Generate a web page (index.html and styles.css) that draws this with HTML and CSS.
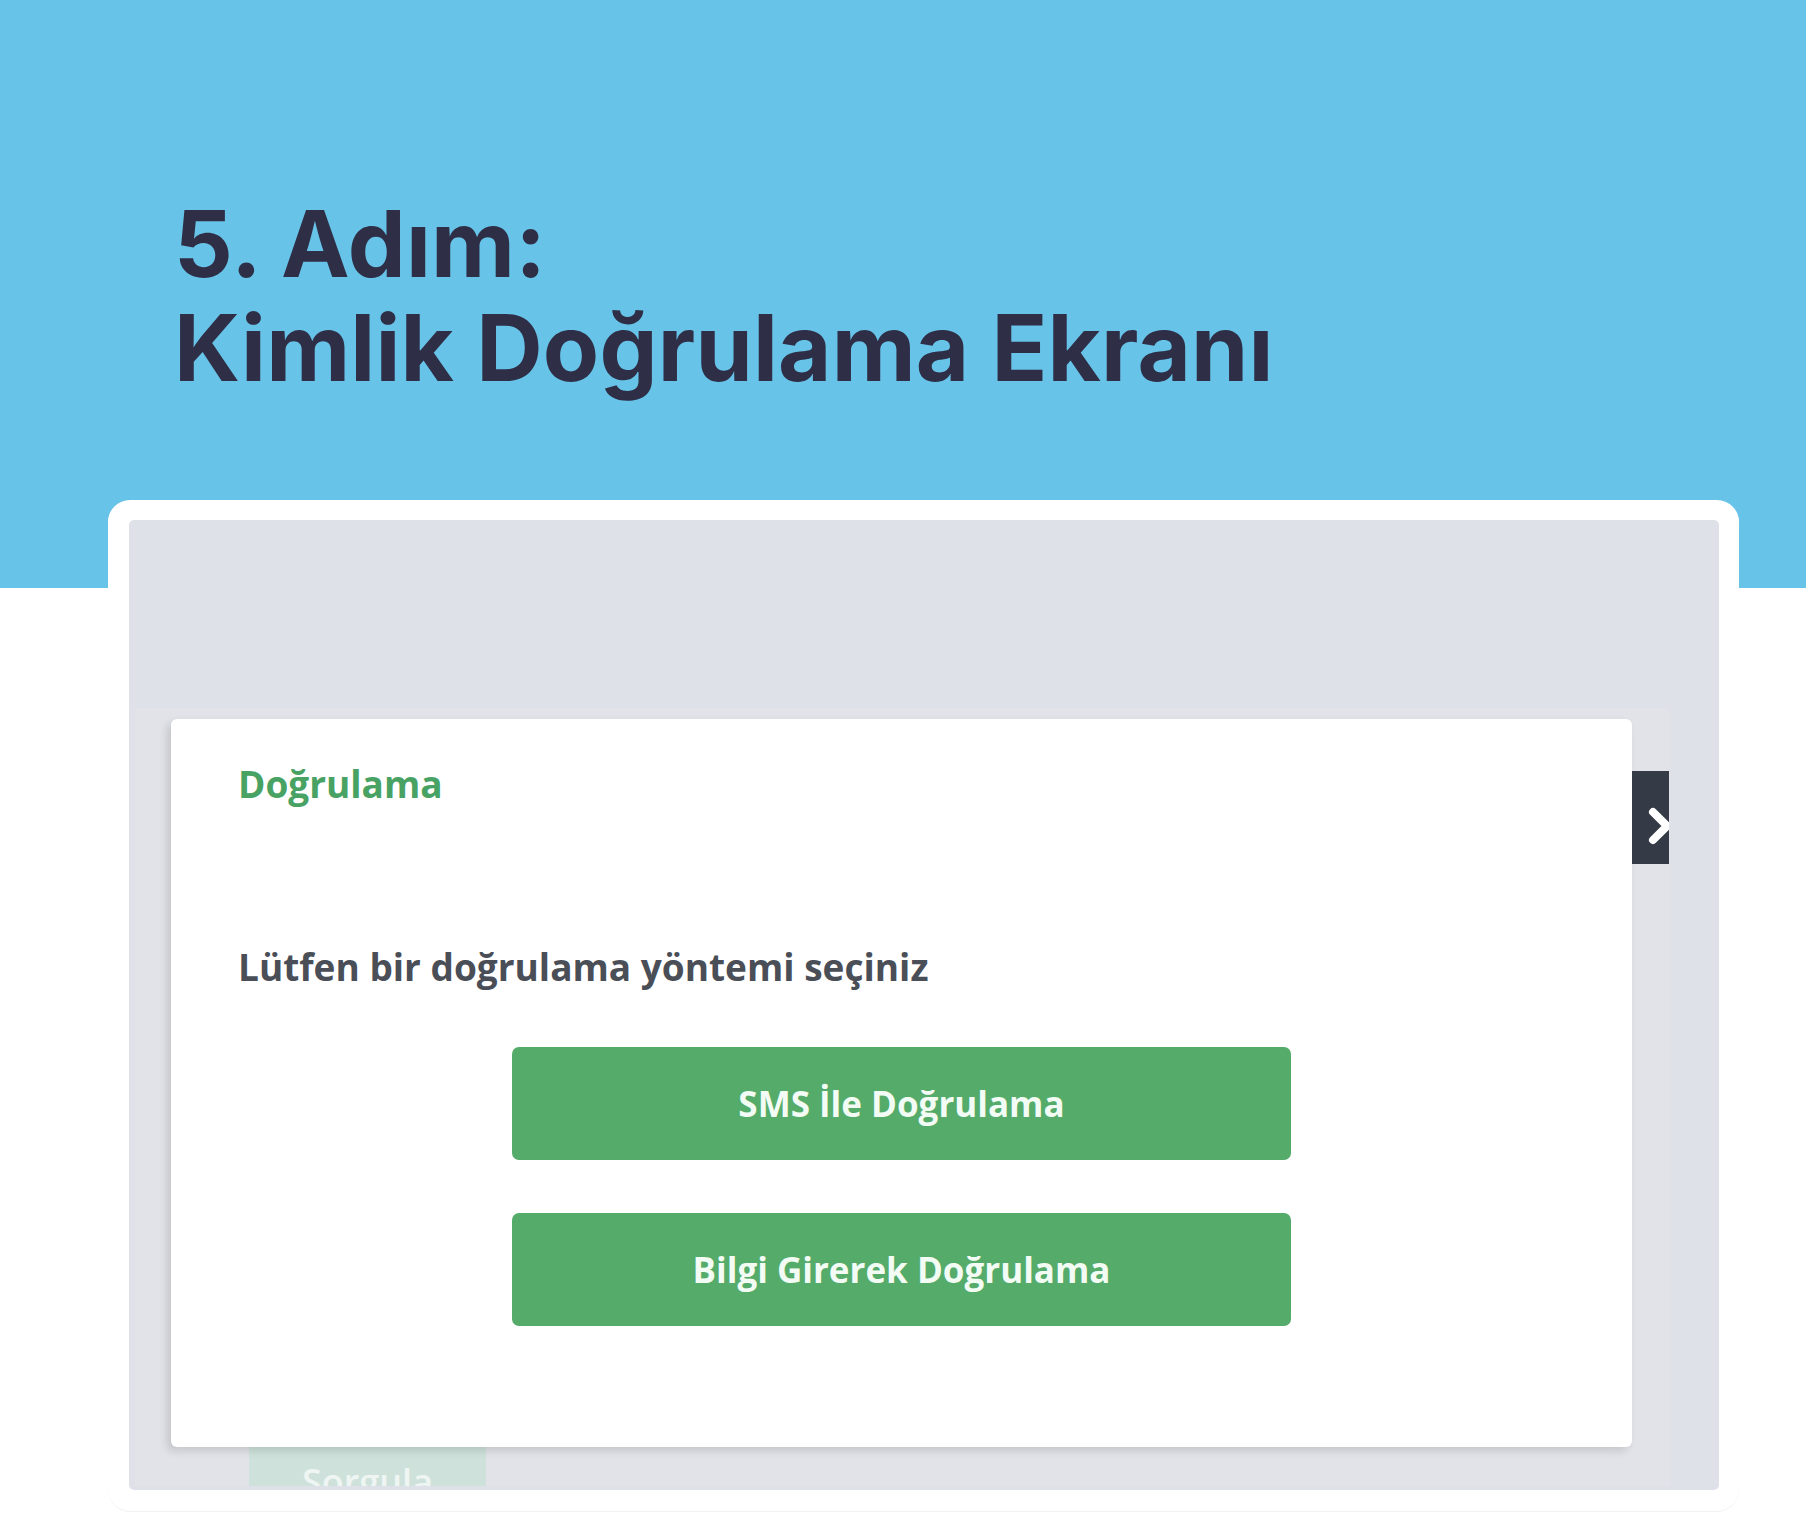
FILE: index.html
```html
<!DOCTYPE html>
<html lang="tr">
<head>
    <meta charset="UTF-8">
    <meta name="viewport" content="width=device-width, initial-scale=1.0">
    <title>5. Adım: Kimlik Doğrulama Ekranı</title>
    <link rel="stylesheet" href="styles.css">
</head>
<body>
    <div class="page">
        <!-- Title -->
        <h1 class="step-title">5. Adım:<br>Kimlik Doğrulama Ekranı</h1>

        <!-- Screenshot frame -->
        <div class="shot-frame">
            <div class="shot-screen">
                <div class="backdrop">
                    <div class="modal-row">
                        <div class="modal-card">
                            <h2 class="modal-title">Doğrulama</h2>
                            <p class="modal-text">Lütfen bir doğrulama yöntemi seçiniz</p>
                            <div class="modal-actions">
                                <button class="btn-verify">SMS İle Doğrulama</button>
                                <button class="btn-verify">Bilgi Girerek Doğrulama</button>
                            </div>
                        </div>
                        <div class="side-tab">
                            <svg viewBox="0 0 28 40" fill="none" stroke="#fff" stroke-width="8" stroke-linecap="round" stroke-linejoin="round">
                                <path d="M6 6l14 14L6 34"/>
                            </svg>
                        </div>
                    </div>
                    <div class="btn-query">Sorgula</div>
                </div>
            </div>
        </div>
    </div>
</body>
</html>
```

FILE: styles.css
```css
* {
    margin: 0;
    padding: 0;
    box-sizing: border-box;
}

body {
    font-family: "Open Sans", "Noto Sans", sans-serif;
    background: linear-gradient(180deg, #68c3e8 0, #68c3e8 588px, #fff 588px);
    color: #333;
    min-height: 1532px;
}

.page {
    padding: 192px 0 0 108px;
}

/* Title */
.step-title {
    font-family: Inter, "Liberation Sans", sans-serif;
    font-size: 92px;
    font-weight: 700;
    line-height: 104px;
    letter-spacing: 0.2px;
    color: #2e2f47;
    margin-left: 66px;
    margin-bottom: 100px;
}

/* Frame */
.shot-frame {
    width: 1631px;
    height: 1011px;
    background: #fff;
    border-radius: 22px;
    padding: 20px 20px 21px 21px;
    box-shadow: 0 1px 0 #f1f2f4;
}

.shot-screen {
    height: 970px;
    background: #dfe1e8;
    border-radius: 5px;
    overflow: hidden;
    padding: 188px 49px 0 6px;
}

.backdrop {
    height: 778px;
    background: #e2e3e8;
    overflow: hidden;
    padding: 11px 0 0 36px;
}

.modal-row {
    display: flex;
    align-items: flex-start;
    position: relative;
    z-index: 1;
}

/* Modal card */
.modal-card {
    width: 1461px;
    height: 728px;
    background: #fff;
    border-radius: 6px;
    box-shadow: -4px 4px 9px rgba(0,0,0,0.13);
    padding: 40px 67px 0;
}

.modal-title {
    font-size: 37px;
    font-weight: 700;
    color: #47a263;
    line-height: 50px;
}

.modal-text {
    font-size: 37px;
    font-weight: 700;
    color: #4a4e57;
    line-height: 46px;
    margin-top: 135px;
}

.modal-actions {
    display: flex;
    flex-direction: column;
    align-items: center;
    gap: 53px;
    margin-top: 57px;
}

.btn-verify {
    width: 779px;
    height: 113px;
    background: #55ab69;
    border: none;
    border-radius: 7px;
    font-family: "Open Sans", "Noto Sans", sans-serif;
    font-size: 35px;
    font-weight: 700;
    color: #f2fbf4;
    cursor: pointer;
}

.side-tab {
    width: 37px;
    height: 93px;
    margin-top: 52px;
    background: #343a46;
    overflow: hidden;
    padding: 35px 0 0 15px;
}

.side-tab svg {
    width: 28px;
    height: 40px;
}

/* Faded button under the modal */
.btn-query {
    width: 237px;
    height: 80px;
    margin: -12px 0 0 78px;
    background: #cee2db;
    color: #eef5f3;
    font-size: 36px;
    font-weight: 600;
    text-align: center;
    padding-top: 22px;
}
```
